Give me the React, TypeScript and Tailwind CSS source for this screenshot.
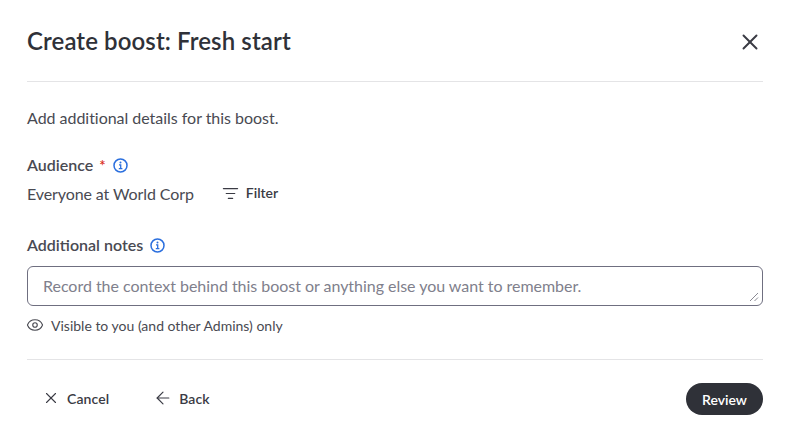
import React from 'react';
import { X, ListFilter, Eye, ArrowLeft } from 'lucide-react';

const InfoIcon: React.FC<{ className?: string }> = ({ className }) => (
  <svg width="15" height="15" viewBox="0 0 15 15" fill="none" className={className}>
    <circle cx="7.5" cy="7.5" r="6.5" stroke="#2b6fde" strokeWidth="1.5" />
    <circle cx="7.5" cy="4.6" r="1" fill="#2b6fde" />
    <path d="M6 6.9h1.7v3.6M5.8 10.6h3.6" stroke="#2b6fde" strokeWidth="1.3" />
  </svg>
);

const App: React.FC = () => {
  return (
    <div className="w-[788px] h-[442px] bg-white pl-[27px] pr-[25px] font-['Lato',sans-serif] text-[#494a52] overflow-hidden">
      {/* Header */}
      <div className="flex items-center justify-between h-[82px] border-b border-[#e4e4e6]">
        <h1 className="text-[24px] font-semibold text-[#2f3138] tracking-[0.1px]">Create boost: Fresh start</h1>
        <button className="mt-[2px] text-[#3a3b44]">
          <X size={26} strokeWidth={1.8} />
        </button>
      </div>

      <p className="mt-[26px] text-[16px] leading-[20px] tracking-[-0.03px]">Add additional details for this boost.</p>

      {/* Audience */}
      <div className="mt-[27px] flex items-center h-[20px] text-[16px] font-semibold">
        Audience
        <span className="ml-[6px] text-[#d92d20] text-[15px]">*</span>
        <InfoIcon className="ml-[7px]" />
      </div>
      <div className="mt-[9px] flex items-center h-[20px]">
        <span className="text-[16px] tracking-[-0.1px]">Everyone at World Corp</span>
        <ListFilter size={17} strokeWidth={1.7} className="ml-[28px] -mt-[1px] text-[#3a3b44]" />
        <span className="ml-[7px] -mt-[3px] text-[14px] font-semibold text-[#3a3b44]">Filter</span>
      </div>

      {/* Notes */}
      <div className="mt-[31px] flex items-center h-[20px] text-[16px] font-semibold">
        Additional notes
        <InfoIcon className="ml-[7px]" />
      </div>
      <div className="relative mt-[11px]">
        <textarea
          className="block w-full h-[40px] resize-none rounded-[6px] border border-[#6f6f80] px-[15px] py-[9px] text-[16px] leading-[20px] tracking-[-0.03px] outline-none placeholder:text-[#80808c]"
          placeholder="Record the context behind this boost or anything else you want to remember."
        />
        <svg width="10" height="10" viewBox="0 0 10 10" className="absolute right-[4px] bottom-[4px]" fill="none">
          <path d="M1 9 9 1M5.5 9 9 5.5" stroke="#8a8a94" strokeWidth="1" />
        </svg>
      </div>
      <div className="mt-[10px] flex items-center h-[18px] text-[14px]">
        <Eye size={18} strokeWidth={1.5} className="-ml-[1px] -mt-[1px] text-[#494a52]" />
        <span className="ml-[7px]">Visible to you (and other Admins) only</span>
      </div>

      {/* Footer */}
      <div className="mt-[25px] border-t border-[#e4e4e6] pt-[23px] flex items-center justify-between">
        <div className="flex items-center -mt-[2px] text-[14px] font-semibold text-[#3a3b44]">
          <button className="flex items-center ml-[15px]">
            <X size={18} strokeWidth={1.5} />
            <span className="ml-[7px] tracking-[0.1px]">Cancel</span>
          </button>
          <button className="flex items-center ml-[44px]">
            <ArrowLeft size={20} strokeWidth={1.4} />
            <span className="ml-[6px] tracking-[0.1px]">Back</span>
          </button>
        </div>
        <button className="h-[32px] w-[77px] rounded-full bg-[#2f3138] text-white text-[14px] font-semibold">Review</button>
      </div>
    </div>
  );
};

export default App;
